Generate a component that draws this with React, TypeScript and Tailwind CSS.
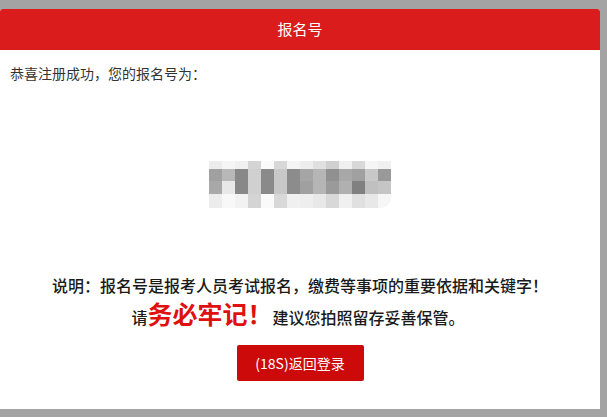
const cols: string[][] = [
  ['bg-[#ececec]', 'bg-[#a0a0a0]', 'bg-[#a8a8a8]', 'bg-[#ececec]'],
  ['bg-[#f5f5f5]', 'bg-[#b8b8b8]', 'bg-[#e8e8e8]', 'bg-[#f8f8f8]'],
  ['bg-[#f0f0f0]', 'bg-[#888888]', 'bg-[#888888]', 'bg-[#f2f2f2]'],
  ['bg-[#d4d4d4]', 'bg-[#d0d0d0]', 'bg-[#d0d0d0]', 'bg-[#d4d4d4]'],
  ['bg-[#fafafa]', 'bg-[#8a8a8a]', 'bg-[#8a8a8a]', 'bg-[#fafafa]'],
  ['bg-[#d8d8d8]', 'bg-[#c8c8c8]', 'bg-[#c8c8c8]', 'bg-[#d8d8d8]'],
  ['bg-[#f5f5f5]', 'bg-[#8c8c8c]', 'bg-[#8c8c8c]', 'bg-[#f0f0f0]'],
  ['bg-[#ededed]', 'bg-[#a5a5a5]', 'bg-[#a0a0a0]', 'bg-[#eeeeee]'],
  ['bg-[#e0e0e0]', 'bg-[#b5b5b5]', 'bg-[#b5b5b5]', 'bg-[#e8e8e8]'],
  ['bg-[#d0d0d0]', 'bg-[#909090]', 'bg-[#9a9a9a]', 'bg-[#d8d8d8]'],
  ['bg-[#f0f0f0]', 'bg-[#a8a8a8]', 'bg-[#b0b0b0]', 'bg-[#f0f0f0]'],
  ['bg-[#d8d8d8]', 'bg-[#a0a0a0]', 'bg-[#808080]', 'bg-[#e0e0e0]'],
  ['bg-[#f5f5f5]', 'bg-[#c8c8c8]', 'bg-[#c0c0c0]', 'bg-[#e8e8e8]'],
  ['bg-[#f0f0f0]', 'bg-[#999999]', 'bg-[#c5c5c5]', 'bg-[#f6f6f6]'],
];
const rowH = ['h-[8px]', 'h-[12px]', 'h-[13px]', 'h-[14px]'];

const App = () => {
  return (
    <div
      className="w-[607px] h-[417px] bg-[#a3a3a3] pt-[9px] overflow-hidden"
      style={{ fontFamily: '"Noto Sans CJK SC", "Noto Sans", sans-serif' }}
    >
      <div className="w-[600px] h-[400px] bg-white rounded-t-[3px] flex flex-col">
        <div className="h-[41px] bg-[#da1c1c] rounded-t-[3px] flex items-center justify-center text-white text-[15px]">
          报名号
        </div>
        <p className="pl-[10px] pt-[13px] leading-[20px] text-[14px] text-[#333]">
          恭喜注册成功，您的报名号为：
        </p>
        <div className="mt-[78px] flex justify-center">
          <div className="flex rounded-br-[10px] overflow-hidden">
            {cols.map((col, i) => (
              <div key={i} className="flex flex-col w-[13px]">
                {col.map((c, j) => (
                  <div key={j} className={`${c} ${rowH[j]}`} />
                ))}
              </div>
            ))}
          </div>
        </div>
        <p className="mt-[65px] text-center text-[16px] leading-[24px] font-medium text-[#1a1a1a]">
          说明：报名号是报考人员考试报名，缴费等事项的重要依据和关键字！
        </p>
        <p className="mt-[4px] text-center text-[16px] leading-[28px] font-medium text-[#1a1a1a] pr-[4px]">
          请<span className="text-[25px] leading-none font-bold text-[#e01010]">务必牢记！</span>建议您拍照留存妥善保管。
        </p>
        <div className="mt-[14px] flex justify-center">
          <button className="w-[127px] h-[36px] bg-[#cc0a0a] text-white text-[14px] rounded-[2px]">
            (18S)返回登录
          </button>
        </div>
      </div>
    </div>
  );
};

export default App;
